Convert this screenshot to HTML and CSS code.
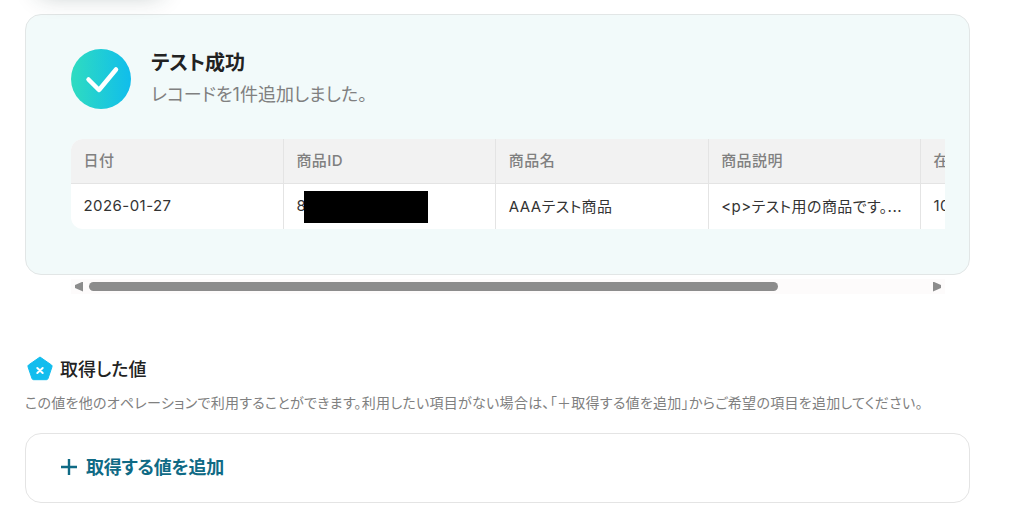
FILE: index.html
```html
<!DOCTYPE html>
<html lang="ja">
<head>
    <meta charset="UTF-8">
    <meta name="viewport" content="width=device-width, initial-scale=1.0">
    <title>テスト成功</title>
    <link rel="stylesheet" href="styles.css">
</head>
<body>
    <div class="top-shadow"></div>

    <main class="page">
        <!-- テスト結果 -->
        <section class="result-card">
            <div class="result-head">
                <svg class="check-icon" width="60" height="60" viewBox="0 0 60 60">
                    <defs>
                        <linearGradient id="checkGrad" x1="0" y1="0" x2="1" y2="0">
                            <stop offset="0" stop-color="#2fdcc0"/>
                            <stop offset="1" stop-color="#10bdec"/>
                        </linearGradient>
                    </defs>
                    <circle cx="30" cy="30" r="30" fill="url(#checkGrad)"/>
                    <path d="M17.5 30.5 L28 41 L45 20.5" fill="none" stroke="#fff" stroke-width="4.5" stroke-linecap="round" stroke-linejoin="round"/>
                </svg>
                <div class="result-text">
                    <h1>テスト成功</h1>
                    <p>レコードを1件追加しました。</p>
                </div>
            </div>

            <div class="table-wrap">
                <table class="record-table">
                    <thead>
                        <tr>
                            <th>日付</th>
                            <th>商品ID</th>
                            <th>商品名</th>
                            <th>商品説明</th>
                            <th>在庫数</th>
                        </tr>
                    </thead>
                    <tbody>
                        <tr>
                            <td>2026-01-27</td>
                            <td class="id-cell">8<span class="redact"></span></td>
                            <td>AAAテスト商品</td>
                            <td>&lt;p&gt;テスト用の商品です。...</td>
                            <td>100</td>
                        </tr>
                    </tbody>
                </table>
            </div>
        </section>

        <!-- 横スクロールバー -->
        <div class="scrollbar">
            <span class="arrow arrow-left"></span>
            <div class="track"><div class="thumb"></div></div>
            <span class="arrow arrow-right"></span>
        </div>

        <!-- 取得した値 -->
        <section class="values">
            <div class="values-title">
                <svg width="26" height="26" viewBox="0 0 26 26">
                    <path d="M13 1 L24.5 9 Q25.4 9.7 25 10.8 L21 22.6 Q20.6 23.7 19.4 23.7 L6.6 23.7 Q5.4 23.7 5 22.6 L1 10.8 Q0.6 9.7 1.5 9 Z" fill="#12bdee" stroke="#12bdee" stroke-linejoin="round"/>
                    <path d="M10.3 12 L15.7 17 M15.7 12 L10.3 17" stroke="#fff" stroke-width="2" stroke-linecap="round"/>
                </svg>
                <h2>取得した値</h2>
            </div>
            <p class="values-note">この値を他のオペレーションで利用することができます。利用したい項目がない場合は、「＋取得する値を追加」からご希望の項目を追加してください。</p>
            <div class="add-box">
                <svg width="16" height="16" viewBox="0 0 16 16">
                    <path d="M8 0 V16 M0 8 H16" stroke="#0f6a85" stroke-width="2.4"/>
                </svg>
                <span class="add-label">取得する値を追加</span>
            </div>
        </section>
    </main>
</body>
</html>
```

FILE: styles.css
```css
/* ページ全体 */
body {
    margin: 0;
    background-color: #fff;
    color: #222;
    font-family: Inter, "Noto Sans CJK JP", "Noto Sans", sans-serif;
    font-feature-settings: "palt";
    overflow: hidden;
}

.top-shadow {
    position: absolute;
    top: -40px;
    left: 40px;
    width: 120px;
    height: 30px;
    box-shadow: 0 4px 24px rgba(30, 60, 60, 0.32);
}

.page {
    width: 945px;
    margin-left: 25px;
    padding-top: 14px;
}

/* テスト結果カード */
.result-card {
    box-sizing: border-box;
    height: 261px;
    padding: 34px 25px 0 45px;
    background-color: #f2fafa;
    border: 1px solid #e2e6e6;
    border-radius: 16px;
}

.result-head {
    display: flex;
    align-items: center;
    gap: 20px;
}

.result-text {
    margin-top: -2px;
}

.result-text h1 {
    margin: 0;
    font-size: 20px;
    line-height: 26px;
    font-weight: 700;
    color: #222;
}

.result-text p {
    margin: 7px 0 0;
    font-size: 18px;
    line-height: 24px;
    color: #808080;
}

.table-wrap {
    margin-top: 30px;
    width: 874px;
    overflow: hidden;
    border-radius: 12px 0 0 12px;
    background-color: #fff;
}

.record-table {
    border-collapse: collapse;
    table-layout: fixed;
    width: 1062px;
    font-size: 15px;
    letter-spacing: 0.03em;
}

.record-table th,
.record-table td {
    box-sizing: border-box;
    width: 212.4px;
    padding: 0 12px 0 12.5px;
    text-align: left;
    white-space: nowrap;
    overflow: hidden;
    border-right: 1px solid #e4e4e4;
}

.record-table th {
    height: 44px;
    padding-bottom: 2px;
    background-color: #f2f2f2;
    border-bottom: 1px solid #e4e4e4;
    color: #808080;
    font-weight: 500;
}

.record-table td {
    height: 46px;
    padding-bottom: 2px;
    color: #333;
}

.id-cell {
    position: relative;
}

.redact {
    position: absolute;
    left: 20px;
    top: 7px;
    width: 124px;
    height: 32px;
    background-color: #000;
}

/* スクロールバー */
.scrollbar {
    display: flex;
    align-items: center;
    width: 874px;
    height: 15px;
    margin: 4px 0 0 46px;
    background-color: #fdfbfb;
}

.arrow {
    flex: none;
    width: 8px;
    height: 10px;
    background-color: #8c8c8c;
}

.arrow-left {
    margin-left: 4px;
    margin-right: 6px;
    clip-path: polygon(100% 0, 100% 100%, 0 65%, 0 35%);
}

.arrow-right {
    margin-left: 9px;
    margin-right: 4px;
    clip-path: polygon(0 0, 0 100%, 100% 65%, 100% 35%);
}

.track {
    flex: 1;
    height: 9px;
}

.thumb {
    width: 689px;
    height: 9px;
    background-color: #8c8c8c;
    border-radius: 5px;
}

/* 取得した値 */
.values {
    margin-top: 63px;
}

.values-title {
    display: flex;
    align-items: center;
    gap: 7px;
    margin-left: 2px;
}

.values-title svg {
    margin-top: -2px;
}

.values-title h2 {
    margin: 0;
    font-size: 18px;
    line-height: 26px;
    font-weight: 500;
    color: #222;
}

.values-note {
    margin: 10px 0 0;
    font-size: 14px;
    line-height: 20px;
    letter-spacing: 0.02em;
    color: #808080;
    white-space: nowrap;
}

.add-box {
    box-sizing: border-box;
    display: flex;
    align-items: center;
    gap: 9px;
    height: 70px;
    margin-top: 20px;
    padding: 0 0 2px 35px;
    background-color: #fff;
    border: 1px solid #e4e4e4;
    border-radius: 16px;
    color: #0f6a85;
    font-size: 18px;
    font-weight: 700;
    letter-spacing: -0.015em;
}

.add-label {
    margin-top: -2px;
}
```
